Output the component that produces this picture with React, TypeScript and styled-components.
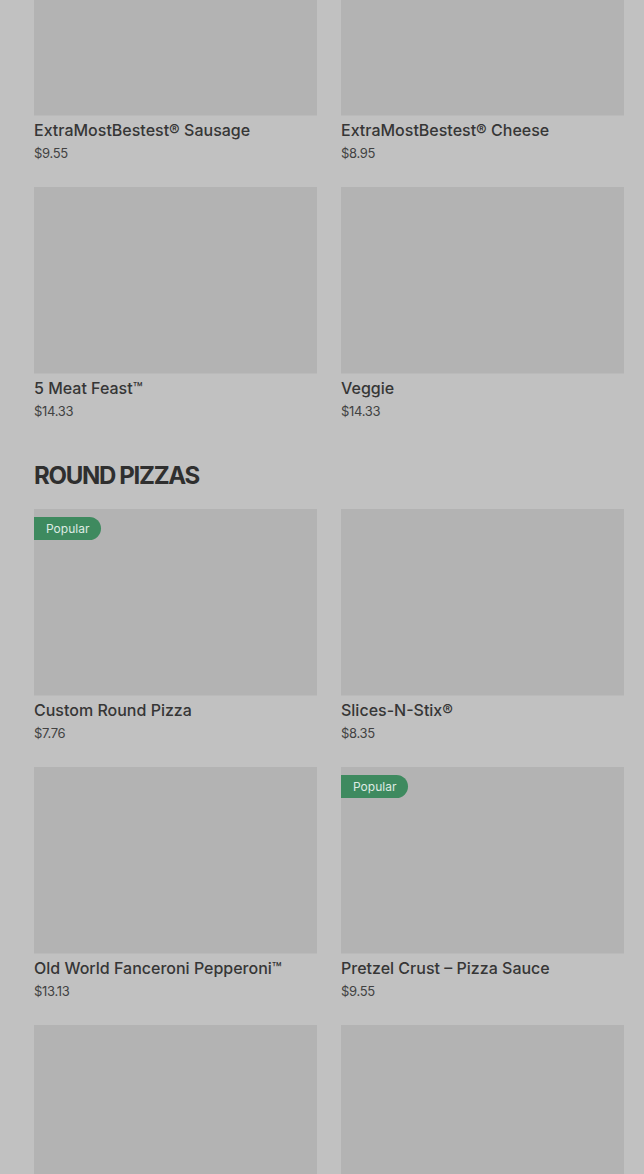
import React from "react";
import styled, { createGlobalStyle } from "styled-components";

const Global = createGlobalStyle`
  html, body { margin: 0; padding: 0; background: #c1c1c1; overflow: hidden; }
  body { font-family: Inter, "Noto Sans", sans-serif; }
`;

const Page = styled.div`
  display: flex;
  flex-direction: column;
  gap: 42px;
  padding: 0 20px 0 34px;
  margin-top: -71px;
`;

const Section = styled.section`
  display: flex;
  flex-direction: column;
  gap: 19px;
`;

const Heading = styled.h2`
  margin: 0;
  font-family: Inter, sans-serif;
  font-size: 24px;
  line-height: 28px;
  font-weight: 700;
  letter-spacing: -1.3px;
  color: #2f2f2f;
`;

const Grid = styled.div`
  display: grid;
  grid-template-columns: 1fr 1fr;
  column-gap: 24px;
  row-gap: 25px;
`;

const Card = styled.div`
  display: flex;
  flex-direction: column;
`;

const Image = styled.div`
  position: relative;
  height: 187px;
  background: #b3b3b3;
  border-bottom: 1px solid #bababa;
  box-sizing: border-box;
`;

const Badge = styled.span`
  position: absolute;
  left: 0;
  top: 8px;
  height: 23px;
  padding: 0 12px 0 12px;
  display: flex;
  align-items: center;
  background: #3e8a5f;
  color: #dfeae3;
  font-size: 12px;
  border-radius: 0 12px 12px 0;
`;

const Title = styled.div`
  margin-top: 4px;
  font-size: 16px;
  line-height: 20px;
  font-weight: 500;
  color: #363636;
`;

const Price = styled.div`
  margin-top: 4px;
  font-size: 13px;
  line-height: 18px;
  color: #424242;
  letter-spacing: -0.3px;
`;

type Item = { name: string; price: string; popular?: boolean };

const first: Item[] = [
  { name: "ExtraMostBestest® Sausage", price: "$9.55" },
  { name: "ExtraMostBestest® Cheese", price: "$8.95" },
  { name: "5 Meat Feast™", price: "$14.33" },
  { name: "Veggie", price: "$14.33" },
];

const round: Item[] = [
  { name: "Custom Round Pizza", price: "$7.76", popular: true },
  { name: "Slices-N-Stix®", price: "$8.35" },
  { name: "Old World Fanceroni Pepperoni™", price: "$13.13" },
  { name: "Pretzel Crust – Pizza Sauce", price: "$9.55", popular: true },
  { name: "Pepperoni", price: "$9.55" },
  { name: "Cheese", price: "$8.95" },
];

const Products = ({ items }: { items: Item[] }) => (
  <Grid>
    {items.map((it) => (
      <Card key={it.name}>
        <Image>{it.popular && <Badge>Popular</Badge>}</Image>
        <Title>{it.name}</Title>
        <Price>{it.price}</Price>
      </Card>
    ))}
  </Grid>
);

export default function App() {
  return (
    <>
      <Global />
      <Page>
        <Section>
          <Products items={first} />
        </Section>
        <Section>
          <Heading>ROUND PIZZAS</Heading>
          <Products items={round} />
        </Section>
      </Page>
    </>
  );
}
